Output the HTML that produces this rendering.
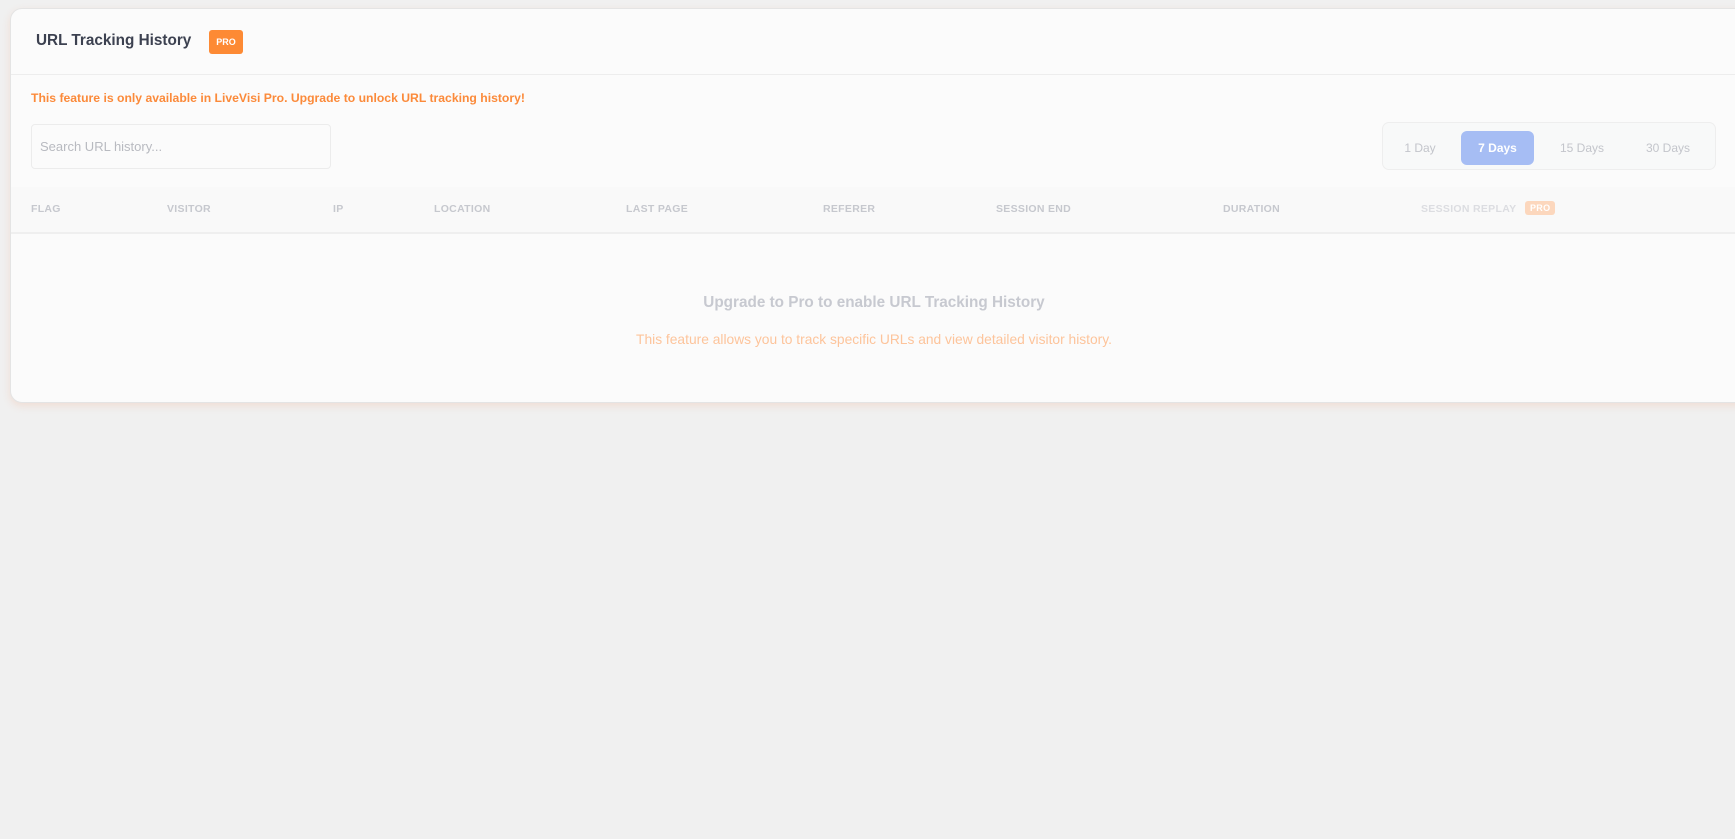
<!DOCTYPE html>
<html><head><meta charset="utf-8"><style>
*{box-sizing:border-box;margin:0;padding:0}
html,body{width:1735px;height:839px;overflow:hidden;background:#f0f0f0;font-family:"Liberation Sans",sans-serif}
.card{position:absolute;left:10px;top:8px;width:1740px;height:395px;background:#fbfbfb;border:1px solid #e4e4e4;border-radius:12px;box-shadow:0 3px 8px rgba(240,200,180,.45)}
.t{position:absolute;white-space:nowrap}
.title{left:25px;top:23px;font-size:15.3px;font-weight:bold;color:#3c4150}
.pro{left:198px;top:21px;width:34px;height:24px;background:#fd8a34;border-radius:3px;color:#fff;font-size:9px;font-weight:bold;text-align:center;line-height:24px}
.hdiv{position:absolute;left:0;right:0;top:65px;height:1px;background:#ededed}
.warn{left:20px;top:82px;font-size:12.2px;font-weight:bold;color:#fb8a3a}
.search{position:absolute;left:20px;top:115px;width:300px;height:45px;border:1px solid #ececec;border-radius:4px;background:#fbfbfb;font-size:13px;color:#b8bac0;padding:14px 8px}
.days{position:absolute;left:1371px;top:113px;width:334px;height:48px;border:1px solid #eeeeee;border-radius:7px;background:#f8f9f9}
.d{position:absolute;top:8px;height:34px;line-height:34px;font-size:12px;color:#c3c5cb;text-align:center}
.act{background:#a6bdf4;color:#fff;font-weight:bold;border-radius:6px}
.th{position:absolute;left:0;right:0;top:178px;height:47px;background:#f9f9f9;border-bottom:2px solid #efefef}
.h{position:absolute;top:16px;font-size:10.5px;font-weight:bold;color:#c6c8ce;letter-spacing:.3px}
.pb{position:absolute;left:104px;top:-2px;background:#fcd7bd;color:#fff;font-size:9px;border-radius:3px;padding:2px 5px}
.up{left:0;width:1726px;text-align:center;top:285px;font-size:15.3px;font-weight:bold;color:#c7c9d0}
.sub{left:0;width:1726px;text-align:center;top:323px;font-size:13.8px;color:#fdc49b}
</style></head><body>
<div class="card">
<div class="t title">URL Tracking History</div>
<div class="t pro">PRO</div>
<div class="hdiv"></div>
<div class="t warn">This feature is only available in LiveVisi Pro. Upgrade to unlock URL tracking history!</div>
<div class="search">Search URL history...</div>
<div class="days">
<div class="d" style="left:2px;width:70px">1 Day</div>
<div class="d act" style="left:78px;width:73px">7 Days</div>
<div class="d" style="left:159px;width:80px">15 Days</div>
<div class="d" style="left:245px;width:80px">30 Days</div>
</div>
<div class="th">
<div class="h" style="left:20px">FLAG</div>
<div class="h" style="left:156px">VISITOR</div>
<div class="h" style="left:322px">IP</div>
<div class="h" style="left:423px">LOCATION</div>
<div class="h" style="left:615px">LAST PAGE</div>
<div class="h" style="left:812px">REFERER</div>
<div class="h" style="left:985px">SESSION END</div>
<div class="h" style="left:1212px">DURATION</div>
<div class="h" style="left:1410px;color:#dcdde1">SESSION REPLAY<span class="pb">PRO</span></div>
</div>
<div class="t up">Upgrade to Pro to enable URL Tracking History</div>
<div class="t sub">This feature allows you to track specific URLs and view detailed visitor history.</div>
</div>
</body></html>
